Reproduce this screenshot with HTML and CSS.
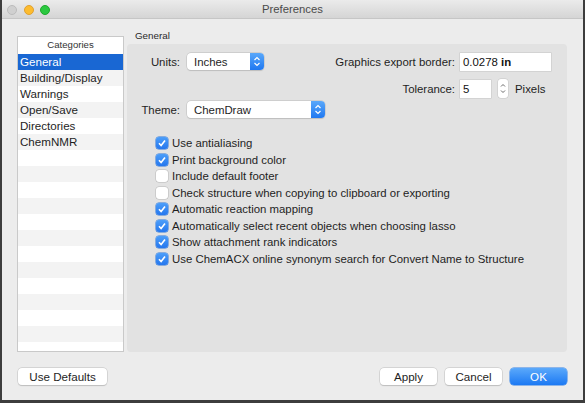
FILE: index.html
```html
<!DOCTYPE html>
<html>
<head>
<meta charset="utf-8">
<link rel="stylesheet" href="styles.css">
</head>
<body>
<div class="window">
  <div class="titlebar">
    <div class="lights">
      <span class="light close"></span>
      <span class="light min"></span>
      <span class="light max"></span>
    </div>
    <div class="title">Preferences</div>
  </div>
  <div class="content">
    <div class="catlist">
      <div class="cathead">Categories</div>
      <div class="catbody">
        <div class="cat selected">General</div>
        <div class="cat">Building/Display</div>
        <div class="cat">Warnings</div>
        <div class="cat">Open/Save</div>
        <div class="cat">Directories</div>
        <div class="cat">ChemNMR</div>
      </div>
    </div>
    <div class="group">
      <div class="grouplabel">General</div>
      <div class="panel">
        <div class="top">
          <div class="leftcol">
            <div class="frow">
              <span class="flabel">Units:</span>
              <div class="select units"><span class="selval">Inches</span><span class="stepblue"><svg width="14" height="17" viewBox="0 0 14 17"><path d="M4.5 7 L7 4.5 L9.5 7 M4.5 10 L7 12.5 L9.5 10" fill="none" stroke="#fff" stroke-width="1.2"/></svg></span></div>
            </div>
            <div class="frow">
              <span class="flabel">Theme:</span>
              <div class="select theme"><span class="selval">ChemDraw</span><span class="stepblue"><svg width="14" height="17" viewBox="0 0 14 17"><path d="M4.5 7 L7 4.5 L9.5 7 M4.5 10 L7 12.5 L9.5 10" fill="none" stroke="#fff" stroke-width="1.2"/></svg></span></div>
            </div>
          </div>
          <div class="rightcol">
            <span class="rlabel">Graphics export border:</span>
            <div class="textbox wide">0.0278 <b>in</b></div>
            <span class="rlabel">Tolerance:</span>
            <div class="tolrow">
              <div class="textbox narrow">5</div>
              <span class="stepper"><svg width="10" height="19" viewBox="0 0 10 19"><path d="M3 7.5 L5 5.5 L7 7.5 M3 11.5 L5 13.5 L7 11.5" fill="none" stroke="#6a6a6a" stroke-width="1"/></svg></span>
              <span class="unit">Pixels</span>
            </div>
          </div>
        </div>
        <div class="checks">
          <div class="check"><span class="box on"><svg width="12" height="12" viewBox="0 0 12 12"><path d="M3 6.3 L5.1 8.5 L9 3.6" fill="none" stroke="#fff" stroke-width="1.6"/></svg></span>Use antialiasing</div>
          <div class="check"><span class="box on"><svg width="12" height="12" viewBox="0 0 12 12"><path d="M3 6.3 L5.1 8.5 L9 3.6" fill="none" stroke="#fff" stroke-width="1.6"/></svg></span>Print background color</div>
          <div class="check"><span class="box"></span>Include default footer</div>
          <div class="check"><span class="box"></span>Check structure when copying to clipboard or exporting</div>
          <div class="check"><span class="box on"><svg width="12" height="12" viewBox="0 0 12 12"><path d="M3 6.3 L5.1 8.5 L9 3.6" fill="none" stroke="#fff" stroke-width="1.6"/></svg></span>Automatic reaction mapping</div>
          <div class="check"><span class="box on"><svg width="12" height="12" viewBox="0 0 12 12"><path d="M3 6.3 L5.1 8.5 L9 3.6" fill="none" stroke="#fff" stroke-width="1.6"/></svg></span>Automatically select recent objects when choosing lasso</div>
          <div class="check"><span class="box on"><svg width="12" height="12" viewBox="0 0 12 12"><path d="M3 6.3 L5.1 8.5 L9 3.6" fill="none" stroke="#fff" stroke-width="1.6"/></svg></span>Show attachment rank indicators</div>
          <div class="check"><span class="box on"><svg width="12" height="12" viewBox="0 0 12 12"><path d="M3 6.3 L5.1 8.5 L9 3.6" fill="none" stroke="#fff" stroke-width="1.6"/></svg></span>Use ChemACX online synonym search for Convert Name to Structure</div>
        </div>
      </div>
    </div>
  </div>
  <div class="buttons">
    <button class="btn defaults">Use Defaults</button>
    <div class="spacer"></div>
    <button class="btn">Apply</button>
    <button class="btn">Cancel</button>
    <button class="btn primary">OK</button>
  </div>
</div>
</body>
</html>
```
FILE: styles.css
```css
html, body {
  margin: 0;
  padding: 0;
}
body {
  background: #3d3d3d;
  width: 585px;
  height: 403px;
  overflow: hidden;
  font-family: "Liberation Sans", Arial, sans-serif;
  font-size: 11.4px;
  color: #1e1e1e;
  white-space: nowrap;
}
.window {
  margin-left: 2px;
  width: 581px;
  height: 400px;
  background: #ececec;
  display: flex;
  flex-direction: column;
}
.titlebar {
  flex: none;
  height: 18px;
  border-bottom: 1px solid #c6c6c6;
  background: linear-gradient(#ebebeb, #d5d5d5);
  position: relative;
  display: flex;
  align-items: center;
  justify-content: center;
}
.lights {
  position: absolute;
  left: 5px;
  top: 5px;
  display: flex;
  gap: 6.7px;
}
.light {
  width: 10px;
  height: 10px;
  border-radius: 50%;
  box-sizing: border-box;
}
.light.close { background: #d0d0d0; border: 0.5px solid #bcbcbc; }
.light.min { background: #fdbc2f; border: 0.5px solid #e0a130; }
.light.max { background: #2bc840; border: 0.5px solid #1ea92c; }
.title {
  font-size: 11.3px;
  color: #4a4a4a;
}
.content {
  flex: none;
  display: flex;
  align-items: flex-start;
  padding: 11px 0 0 15px;
  gap: 3px;
}
.catlist {
  margin-top: 6px;
  width: 105px;
  height: 314px;
  background: #fff;
  border: 1px solid #c9c9c9;
  display: flex;
  flex-direction: column;
}
.cathead {
  height: 17px;
  line-height: 15px;
  text-align: center;
  font-size: 9.6px;
  color: #333;
}
.catbody {
  flex: 1;
  background: repeating-linear-gradient(#fff 0 16px, #f3f3f3 16px 32px);
}
.cat {
  height: 16px;
  line-height: 16px;
  padding-left: 2px;
  font-size: 11.6px;
}
.cat.selected {
  background: #1967d3;
  color: #fff;
}
.group {
  display: flex;
  flex-direction: column;
}
.grouplabel {
  font-size: 9.8px;
  color: #2a2a2a;
  height: 12px;
  line-height: 12px;
  padding-left: 8px;
  margin-bottom: 2px;
}
.panel {
  width: 440px;
  height: 308px;
  background: #e2e2e2;
  border-radius: 4px;
  box-sizing: border-box;
  padding: 9px 16px 0 10px;
}
.top {
  display: flex;
  justify-content: space-between;
  align-items: flex-start;
}
.leftcol {
  display: flex;
  flex-direction: column;
  gap: 31px;
}
.frow {
  display: flex;
  align-items: center;
  gap: 7px;
}
.flabel {
  width: 43px;
  text-align: right;
}
.select {
  height: 17px;
  background: #fff;
  border-radius: 4px;
  box-shadow: 0 0 0 0.5px #bdbdbd, 0 0.5px 1px rgba(0,0,0,0.15);
  display: flex;
  align-items: center;
  overflow: hidden;
}
.select.units { width: 77px; }
.select.theme { width: 138px; }
.selval {
  flex: 1;
  padding-left: 7px;
}
.stepblue {
  width: 14px;
  height: 17px;
  background: linear-gradient(#5aa8fa, #1f78f1);
  display: flex;
}
.rightcol {
  display: grid;
  grid-template-columns: auto auto;
  column-gap: 5px;
  row-gap: 8px;
  align-items: center;
  align-content: start;
  justify-items: start;
}
.rlabel {
  justify-self: end;
}
.textbox {
  height: 18px;
  line-height: 18px;
  background: #fff;
  box-shadow: 0 0 0 0.5px #c4c4c4;
  box-sizing: border-box;
  padding-left: 3px;
  color: #111;
}
.textbox.wide { width: 91px; }
.textbox.narrow { width: 31px; }
.tolrow {
  display: flex;
  align-items: center;
}
.stepper {
  margin-left: 7px;
  width: 10px;
  height: 19px;
  background: #fff;
  border-radius: 3px;
  box-shadow: 0 0 0 0.5px #c4c4c4;
  display: flex;
}
.unit {
  margin-left: 7px;
}
.checks {
  margin-top: 17px;
  padding-left: 19px;
  display: flex;
  flex-direction: column;
}
.check {
  height: 16.5px;
  display: flex;
  align-items: center;
  gap: 4px;
}
.box {
  flex: none;
  width: 12px;
  height: 12px;
  box-sizing: border-box;
  border-radius: 3px;
  background: #fff;
  box-shadow: 0 0 0 0.5px #b5b5b5;
  display: flex;
}
.box.on {
  background: linear-gradient(#4c9ef9, #2577ee);
  box-shadow: 0 0 0 0.5px #2a74d8;
}
.buttons {
  flex: none;
  display: flex;
  align-items: center;
  padding: 16px 16px 0 16px;
  gap: 8px;
}
.spacer { flex: 1; }
.btn {
  height: 17px;
  width: 57px;
  padding: 0;
  border: none;
  border-radius: 4px;
  background: #fff;
  box-shadow: 0 0 0 0.5px #c2c2c2, 0 0.5px 1px rgba(0,0,0,0.2);
  font-family: "Liberation Sans", Arial, sans-serif;
  font-size: 11.6px;
  color: #1e1e1e;
}
.btn.defaults { width: 89px; }
.btn.primary {
  background: linear-gradient(#5ba9fb, #1c79f3);
  color: #fff;
  box-shadow: 0 0 0 0.5px #2f7fe6;
}
```
